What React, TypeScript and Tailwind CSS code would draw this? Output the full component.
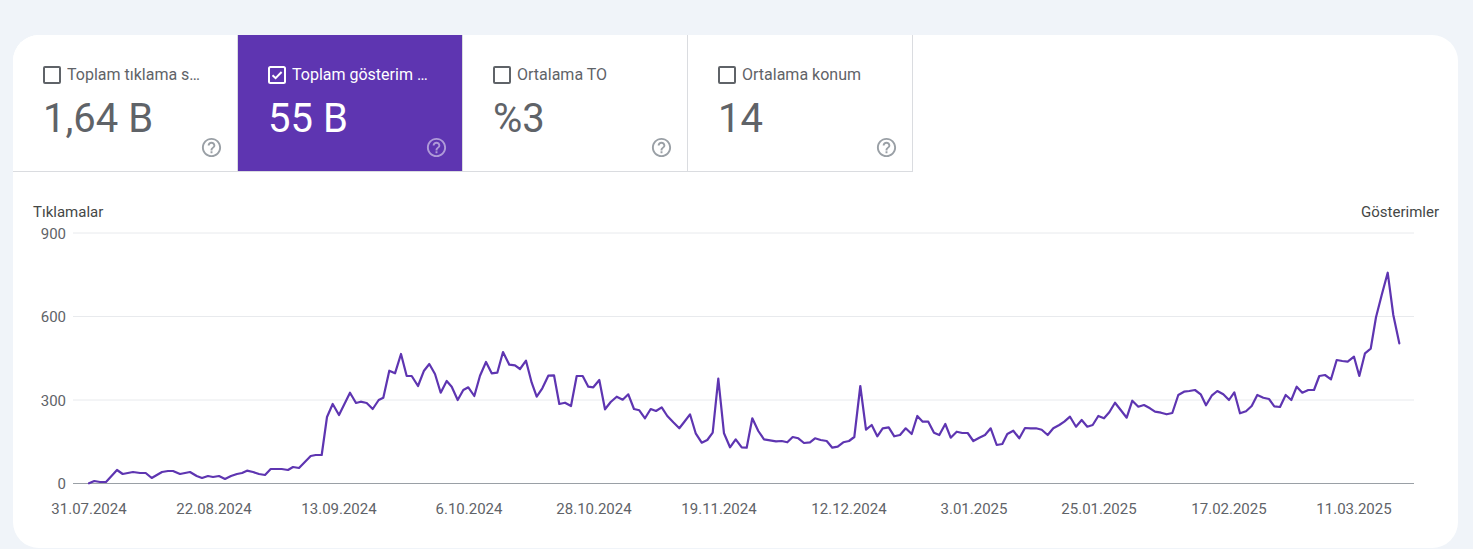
import React from "react";

const LINE =
  "89,483.3 94.3,481 100,482 106,482 117,470 122.7,474 133,472 140,473 145.7,473 151.7,478 162,472 168,471 173,471 180,474 190,472 196.7,476 202,478 208,476 213,477 219,476 225,479 231,476 237,474 242,473 247,470.7 253,472 259,474 265,475 270.7,469 281.7,469 288,470 293,467 299,468 " +
  "310.7,456 315.7,455 321.7,455 327,417 332.7,404 339,415 350,392.7 356,403 360.7,401.7 366.7,403 372.7,409 378.7,400 383.3,397.7 389.3,370.7 395,373.3 401,354 406.7,376 411.7,376 418,386 424,370.7 429.3,364 435,374 440.7,392.7 446.7,381 451.7,386.7 457.7,400 463.3,390 468.3,387.3 474.3,396 480,375.7 486,362 491.7,373.3 497.3,372.7 503,352 509.3,364.7 515,365.3 520,369 526,360.7 531.7,382.7 536.7,396.7 542.3,388.3 548.3,375.7 554,375.3 559.3,404 565,402.7 571,406 576.7,376 582.7,376 588.3,386.7 593.3,387.3 599.3,380 605,409.3 610.7,402 616.7,396.7 622.7,399.7 628.3,394.3 634,409 639.3,410.3 645,418.3 650.7,409 656,411 661.7,407.3 667.3,416 673.3,422.3 679.3,428.3 684,422.3 690,414.3 695.7,433.3 701.7,442.7 707.3,440 712.7,432.7 718.3,378.7 724,433.3 730,447.3 735.7,439.3 741.7,447.3 746.7,447.7 " +
  "752.3,418.3 758.3,431 764,439.3 770,440.3 776,441.3 781.7,441 787.3,442.3 792.7,437 798.3,438.3 804,443 810,442.3 815,438.3 820.7,440 826.7,441 832.3,447.7 837.7,446.7 843.3,442.3 849,441 854.3,437 860.3,386 866,429.7 871.7,425 877.3,436.3 882.7,428.3 888.7,427.3 894.3,436.3 900,435 905.7,428.3 911.7,434 917.3,416 922.7,421.7 928.3,421.7 934,432.7 939.3,435 945.3,424 950.7,437.7 956.7,431.7 962.3,433 967.7,433 973.3,441 979.3,437.7 985,435 990.7,428.3 996.7,445 1002.3,444 1007.3,434 1013.3,430.7 1019.3,438.3 1025,428 1030.7,428.3 1036,428.3 1041.7,429.7 1047.7,435 1053.3,428.3 1059.3,425 1064.3,421.7 1070,416.7 1076,426.7 1081.7,420 1087.3,426.7 1092.7,425 1098.3,416 1104,418.3 1109.3,412.3 1115,402.7 1120.7,410 1126.7,417.7 1132.3,400.7 1138.3,406.7 1144,405 1150,408.3 " +
  "1155,411.7 1161,412.7 1166.7,414.3 1172.3,413 1178.3,395 1184,391.7 1189.3,391 1195,390 1200.7,394.3 1206,405.3 1211.7,395.7 1217.3,391 1223.3,394.3 1229,400 1234.3,392.3 1240,413.3 1246,411.3 1251.7,406 1257.3,395 1263.3,397.7 1269,399 1274.3,406.3 1280,407 1285.7,395 1291.3,400 1296.7,386.7 1302.3,392.7 1308.3,390 1314,390 1319.3,376 1325,375 1331,379.3 1336.7,360 1342.3,361 1347.7,361.7 1354,356.7 1359.3,376 1365,353.3 1370.7,348.7 1376,317.3 1381.7,295 1387.7,272.7 1393.3,315 1399.3,343.3";

const tabs = [
  { label: "Toplam tıklama sayısı", value: "1,64 B", active: false },
  { label: "Toplam gösterim sayısı", value: "55 B", active: true },
  { label: "Ortalama TO", value: "%3", active: false },
  { label: "Ortalama konum", value: "14", active: false },
];

const yTicks = [
  { v: "900", y: 233 },
  { v: "600", y: 316.5 },
  { v: "300", y: 400 },
];

const xTicks = [
  { t: "31.07.2024", x: 89 },
  { t: "22.08.2024", x: 214 },
  { t: "13.09.2024", x: 339 },
  { t: "6.10.2024", x: 469 },
  { t: "28.10.2024", x: 594 },
  { t: "19.11.2024", x: 719 },
  { t: "12.12.2024", x: 849 },
  { t: "3.01.2025", x: 974 },
  { t: "25.01.2025", x: 1099 },
  { t: "17.02.2025", x: 1229 },
  { t: "11.03.2025", x: 1354 },
];

const HelpIcon = ({ className }: { className: string }) => (
  <svg viewBox="0 0 24 24" width="23" height="23" className={className} fill="currentColor">
    <path d="M11 18h2v-2h-2v2zm1-16C6.48 2 2 6.48 2 12s4.48 10 10 10 10-4.48 10-10S17.52 2 12 2zm0 18c-4.41 0-8-3.59-8-8s3.59-8 8-8 8 3.590 8 8-3.59 8-8 8zm0-14c-2.21 0-4 1.79-4 4h2c0-1.1.9-2 2-2s2 .9 2 2c0 2-3 1.75-3 5h2c0-2.25 3-2.5 3-5 0-2.21-1.79-4-4-4z" />
  </svg>
);

const Checkbox = ({ checked }: { checked: boolean }) =>
  checked ? (
    <svg viewBox="0 0 18 18" width="18" height="18" className="shrink-0">
      <rect x="1" y="1" width="16" height="16" rx="1.5" fill="none" stroke="white" strokeWidth="2" />
      <polyline points="4.5,9.2 7.6,12.2 13.6,6" fill="none" stroke="white" strokeWidth="2" />
    </svg>
  ) : (
    <div className="w-[18px] h-[18px] shrink-0 rounded-[2px] border-2 border-[#5f6368]" />
  );

const MetricTab = ({ label, value, active }: { label: string; value: string; active: boolean }) => (
  <div
    className={`relative w-[225px] h-[137px] shrink-0 pl-[30px] pr-[31px] pt-[28px] border-r border-b border-[#dadce0] ${
      active ? "bg-[#5e35b1] border-[#5e35b1] text-white" : "bg-white text-[#5f6368]"
    }`}
  >
    <div className="flex items-center gap-[6px] h-6">
      <Checkbox checked={active} />
      <span className="truncate text-[16px] leading-6">{label}</span>
    </div>
    <div className="mt-[8px] text-[40px] leading-[48px]">{value}</div>
    <HelpIcon className={`absolute right-[14px] bottom-[12px] ${active ? "text-white/50" : "text-[#9aa0a6]"}`} />
  </div>
);

export default function App() {
  return (
    <div className="w-[1473px] h-[549px] overflow-hidden bg-[#f0f4f9] pt-[35px] pl-[13px] font-['Roboto',sans-serif]">
      <div className="w-[1445px] h-[513px] bg-white rounded-[26px] overflow-hidden flex flex-col">
        <div className="flex">
          {tabs.map((t) => (
            <MetricTab key={t.label} {...t} />
          ))}
        </div>
        <div className="flex justify-between pl-5 pr-[19px] pt-[30px] text-[15px] leading-5 text-[#444746]">
          <span>Tıklamalar</span>
          <span>Gösterimler</span>
        </div>
        <svg width="1445" height="326" viewBox="13 222 1445 326" className="block">
          {yTicks.map((t) => (
            <g key={t.v}>
              <line x1="73" x2="1414" y1={t.y} y2={t.y} stroke="#e8eaed" strokeWidth="1" />
              <text x="66" y={t.y + 5.5} textAnchor="end" fontSize="15" fill="#5f6368" fontFamily="Roboto, sans-serif">
                {t.v}
              </text>
            </g>
          ))}
          <line x1="73" x2="1414" y1="483.5" y2="483.5" stroke="#9aa0a6" strokeWidth="1" />
          <text x="66" y="489" textAnchor="end" fontSize="15" fill="#5f6368" fontFamily="Roboto, sans-serif">
            0
          </text>
          {xTicks.map((t) => (
            <text key={t.t} x={t.x} y="513.5" textAnchor="middle" fontSize="15" fill="#5f6368" fontFamily="Roboto, sans-serif">
              {t.t}
            </text>
          ))}
          <polyline points={LINE} fill="none" stroke="#5e35b1" strokeWidth="2.2" strokeLinejoin="round" strokeLinecap="round" />
        </svg>
      </div>
    </div>
  );
}
